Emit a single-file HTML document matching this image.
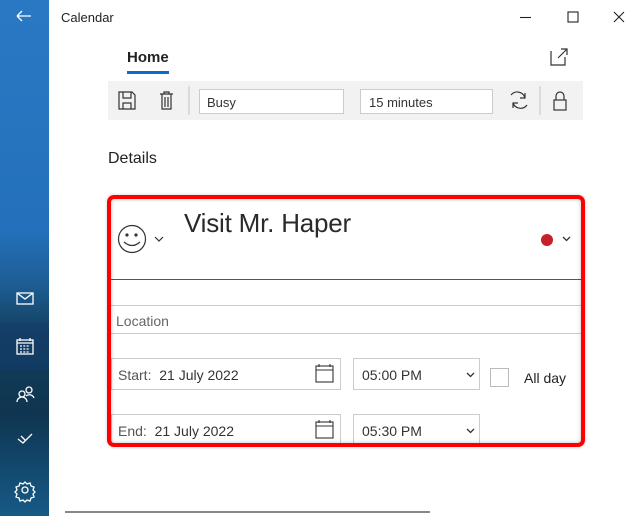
<!DOCTYPE html><html><head><style>
body{margin:0;width:643px;height:516px;overflow:hidden;font-family:"Liberation Sans",sans-serif;background:#fff;position:relative}
.a{position:absolute}
.side{left:0;top:0;width:49px;height:516px;background:linear-gradient(180deg,#2a78c4 0%,#2470ba 45%,#1d5d94 55%,#133f5c 65%,#0f3550 80%,#165a86 100%)}
.inp{position:absolute;border:1px solid #ccc;background:#fff;box-sizing:border-box;font-size:14px;color:#333}
.hl{position:absolute;left:111px;width:470px;height:1px;background:#ccc}
</style></head><body>
<div class="a side"></div>
<div class="a" style="left:0;top:323px;width:49px;height:47px;background:rgba(20,60,110,.55)"></div>
<svg class="a" style="left:0;top:0" width="49" height="516" fill="none" stroke="#fff" stroke-width="1.3">
<path d="M17 16h14M17 16l5-5M17 16l5 5"/>
<rect x="17" y="293" width="16" height="11"/><path d="M17 293l8 6 8-6"/>
<rect x="17" y="340" width="16" height="14"/><path d="M17 343h16M20 338v3M30 338v3"/><path d="M20 346h10M20 349h10M20 352h10" stroke-dasharray="2 1.3"/>
<circle cx="22" cy="394" r="3"/><path d="M17 402a5 5 0 0 1 10 0"/><circle cx="29" cy="390" r="3"/><path d="M26 396a5 5 0 0 1 8 2"/>
<path d="M18 439l5 4 9-9M21 436l4 4"/>
<circle cx="25" cy="490" r="3"/><path d="M25 482l2 2 3-1 1 3 3 1-1 3 2 2-2 2 1 3-3 1-1 3-3-1-2 2-2-2-3 1-1-3-3-1 1-3-2-2 2-2-1-3 3-1 1-3 3 1z"/>
</svg>
<div class="a" style="left:61px;top:10px;font-size:13px;color:#222">Calendar</div>
<svg class="a" style="left:510px;top:8px" width="130" height="20" stroke="#222" fill="none" stroke-width="1.1"><path d="M10 9.5h11"/><rect x="58" y="4" width="10" height="10"/><path d="M104 4l10 10M114 4l-10 10"/></svg>
<div class="a" style="left:127px;top:49px;font-size:15px;font-weight:bold;color:#222">Home</div>
<div class="a" style="left:127px;top:71px;width:42px;height:3px;background:#0a6cce"></div>
<svg class="a" style="left:548px;top:46px" width="22" height="22" fill="none" stroke="#333" stroke-width="1.2"><path d="M3 5v14h14v-8M10 12l9-9M13 3h6v6"/></svg>
<div class="a" style="left:108px;top:81px;width:475px;height:39px;background:#f2f2f2"></div>
<svg class="a" style="left:108px;top:81px" width="475" height="39" fill="none" stroke="#333" stroke-width="1.2">
<path d="M11 11h13l3 3v14H11z"/><path d="M15 11v6h8v-6M15 28v-6h8v6"/>
<path d="M52 13h13M56 13v-2h5v2M54 13v15h9V13M57 16v10M60 16v10"/>
<path d="M81 5v29" stroke="#ccc"/>
<path d="M403 14a8 8 0 0 1 14 3M419 24a8 8 0 0 1-14-2M417 12v5h-5M405 27v-5h5"/>
<path d="M432 5v29" stroke="#ccc"/>
<rect x="446" y="19" width="12" height="10"/><path d="M448 19v-4a4 4 0 0 1 8 0v4"/>
</svg>
<div class="inp" style="left:199px;top:89px;width:145px;height:25px;padding:5px 7px;font-size:13px">Busy</div>
<div class="inp" style="left:360px;top:89px;width:133px;height:25px;padding:5px 8px;font-size:13px">15 minutes</div>
<div class="a" style="left:108px;top:150px;font-size:16px;color:#222">Details</div>
<svg class="a" style="left:115px;top:224px" width="60" height="32" fill="none" stroke="#333" stroke-width="1.2"><circle cx="17" cy="15" r="13.5"/><circle cx="12" cy="11" r="1" fill="#333"/><circle cx="21" cy="11" r="1" fill="#333"/><path d="M9 18q8 7 16 0"/><path d="M40 13l4 4 4-4"/></svg>
<div class="a" style="left:184px;top:208px;font-size:26px;color:#2a2a2a;letter-spacing:-0.2px">Visit Mr. Haper</div>
<div class="a" style="left:541px;top:234px;width:12px;height:12px;border-radius:50%;background:#c5202c"></div>
<svg class="a" style="left:562px;top:235px" width="10" height="8" fill="none" stroke="#333" stroke-width="1.3"><path d="M1 2l3.5 3.5L8 2"/></svg>
<div class="a" style="left:111px;top:279px;width:470px;height:1px;background:#555"></div>
<div class="hl" style="top:305px"></div>
<div class="a" style="left:116px;top:313px;font-size:14px;color:#666">Location</div>
<div class="hl" style="top:333px"></div>
<div class="inp" style="left:111px;top:358px;width:230px;height:32px;padding:8px 6px;color:#555">Start:&nbsp; <span style="color:#333">21 July 2022</span></div>
<div class="inp" style="left:111px;top:414px;width:230px;height:29px;padding:8px 6px;border-bottom:none;color:#555">End:&nbsp; <span style="color:#333">21 July 2022</span></div>
<svg class="a" style="left:315px;top:364px" width="20" height="80" fill="none" stroke="#333" stroke-width="1.1"><rect x="1" y="2" width="17" height="16"/><path d="M1 6h17M4 0v3M15 0v3"/><rect x="1" y="58" width="17" height="16"/><path d="M1 62h17M4 56v3M15 56v3"/></svg>
<div class="inp" style="left:353px;top:358px;width:127px;height:32px;padding:8px 8px">05:00 PM</div>
<div class="inp" style="left:353px;top:414px;width:127px;height:29px;padding:8px 8px;border-bottom:none">05:30 PM</div>
<svg class="a" style="left:466px;top:371px" width="10" height="64" fill="none" stroke="#333" stroke-width="1.3"><path d="M1 2l3.5 3.5L8 2M1 58l3.5 3.5L8 58"/></svg>
<div class="a" style="left:490px;top:368px;width:19px;height:19px;border:1px solid #bbb;box-sizing:border-box"></div>
<div class="a" style="left:524px;top:370px;font-size:14px;color:#222">All day</div>
<div class="a" style="left:107px;top:195px;width:478px;height:252px;border:4px solid #f00;border-radius:7px;box-sizing:border-box;box-shadow:inset 0 0 4px rgba(0,0,0,.25),0 0 3px rgba(0,0,0,.2)"></div>
<div class="a" style="left:65px;top:511px;width:365px;height:2px;background:#888"></div>
</body></html>
